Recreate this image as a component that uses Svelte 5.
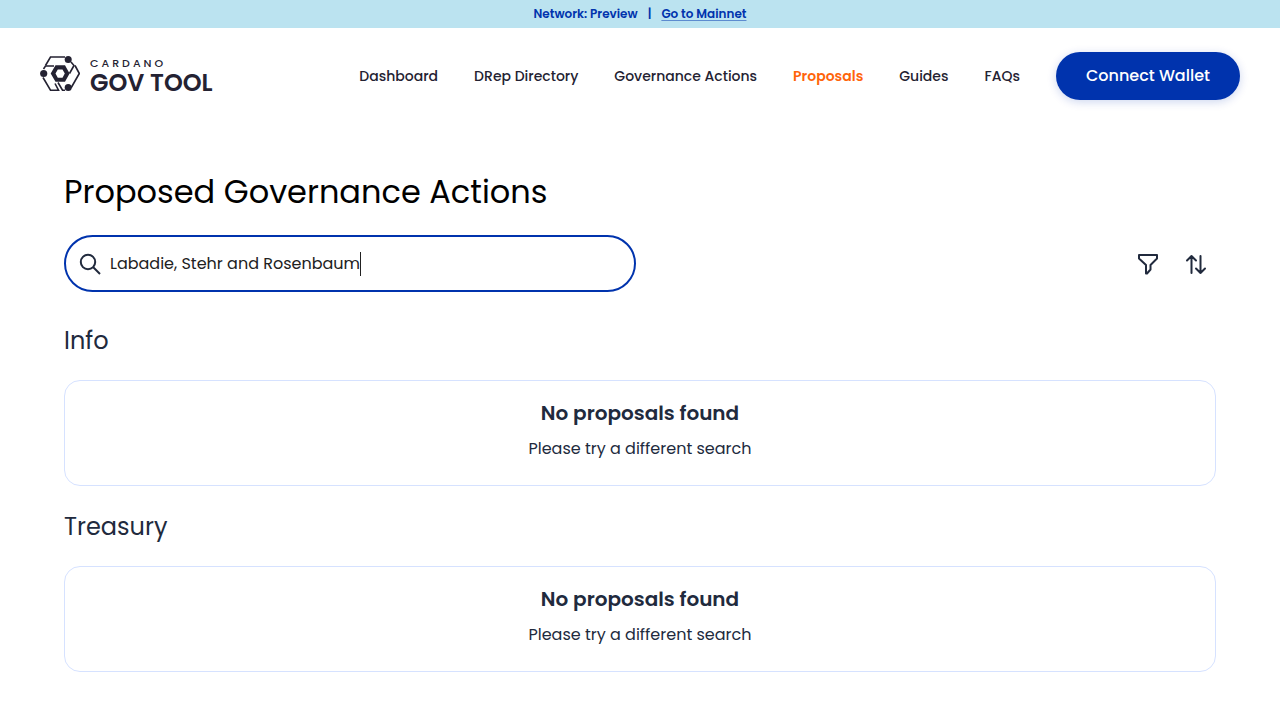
<script>
  import { onMount } from 'svelte';

  const links = ['Dashboard', 'DRep Directory', 'Governance Actions', 'Proposals', 'Guides', 'FAQs'];
  const sections = ['Info', 'Treasury'];
  let query = $state('Labadie, Stehr and Rosenbaum');
  let field;

  onMount(() => {
    field.focus();
    field.setSelectionRange(query.length, query.length);
  });
</script>

<div class="network">
  <span>Network: Preview</span>
  <span class="bar">|</span>
  <a href="#mainnet">Go to Mainnet</a>
</div>

<header>
  <a class="logo" href="#home" aria-label="Cardano Gov Tool">
    <svg width="40" height="36" viewBox="0 0 40 36" aria-hidden="true">
      <g fill="none" stroke="#242232" stroke-width="1.6">
        <path d="M25 1H10.500L5.500 9.500" />
        <path d="M3.500 13L5.500 10H14" />
        <path d="M3 21.500L10.500 34.200H18.500L15 27.500" />
        <path d="M18 26.500L22.500 34.200H25" />
        <path d="M31 6L34 9.500L29.500 17.500" />
        <path d="M35 9.500L39.300 17.500L31 32" />
      </g>
      <g fill="#242232">
        <circle cx="3.700" cy="17.500" r="3.600" />
        <circle cx="28.200" cy="3.500" r="3.500" />
        <circle cx="28.200" cy="31.600" r="3.500" />
        <path fill-rule="evenodd" d="M15.500 9.300H25L29.600 17.500L25 25.700H15.500L10.700 17.500ZM17.800 13.500L15.500 17.500L17.800 21.700H22.500L24.800 17.500L22.500 13.500Z" />
      </g>
    </svg>
    <span class="wordmark"><small>CARDANO</small><strong>GOV TOOL</strong></span>
  </a>
  <nav>
    {#each links as link}
      <a href="#{link}" class:active={link === 'Proposals'}>{link}</a>
    {/each}
    <button class="connect" type="button">Connect Wallet</button>
  </nav>
</header>

<main>
  <h1>Proposed Governance Actions</h1>
  <div class="tools">
    <label class="search">
      <svg width="24" height="24" viewBox="0 0 24 24" fill="none" stroke="#212a3d" stroke-width="2" aria-hidden="true">
        <circle cx="10" cy="10" r="7.200" /><path d="M15 15l7 7" />
      </svg>
      <span class="entry">
        <input type="text" aria-label="Search proposals" bind:value={query} bind:this={field} />
        <span class="caret"></span>
      </span>
    </label>
    <div class="actions">
      <button type="button" aria-label="Filter">
        <svg width="24" height="24" viewBox="0 0 24 24" fill="none" stroke="#212a3d" stroke-width="2" stroke-linejoin="round" aria-hidden="true">
          <path d="M3 3H21V6.500L14.500 13V17.500L11 21.500H10V13L3 6.500Z" />
        </svg>
      </button>
      <button type="button" aria-label="Sort">
        <svg width="24" height="24" viewBox="0 0 24 24" fill="none" stroke="#212a3d" stroke-width="2" stroke-linecap="round" stroke-linejoin="round" aria-hidden="true">
          <path d="M7.500 21V4M3 8.500L7.500 4L12 8.500M16.500 4V21M12 16.500L16.500 21L21 16.500" />
        </svg>
      </button>
    </div>
  </div>

  {#each sections as section}
    <section>
      <h2>{section}</h2>
      <div class="card">
        <h3>No proposals found</h3>
        <p>Please try a different search</p>
      </div>
    </section>
  {/each}
</main>

<style>
  :global(body) {
    background: #fff;
    color: #212a3d;
    font-family: Poppins, Inter, sans-serif;
  }
  h1, h2, h3, p { margin: 0; font-weight: 400; }
  a { color: inherit; text-decoration: none; }
  button { border: 0; font: inherit; cursor: pointer; }

  .network {
    display: flex;
    justify-content: center;
    gap: 10px;
    padding: 4px 16px;
    background: #bbe3f0;
    color: #0033ad;
    font-size: 12px;
    font-weight: 600;
    line-height: 20px;
  }
  .network a {
    text-decoration: underline;
    text-decoration-color: rgba(0, 51, 173, 0.5);
    text-decoration-thickness: 1px;
    text-underline-offset: 2px;
  }

  header {
    display: flex;
    align-items: center;
    justify-content: space-between;
    padding: 24px 40px;
    color: #242232;
  }
  .logo { display: flex; align-items: center; gap: 10px; padding-bottom: 4px; }
  .wordmark { display: flex; flex-direction: column; }
  .wordmark small { font-size: 11px; font-weight: 500; line-height: 18px; letter-spacing: 3px; }
  .wordmark strong { font-size: 24px; font-weight: 600; line-height: 22px; }

  nav {
    display: flex;
    align-items: center;
    gap: 36px;
    font-size: 14px;
    font-weight: 500;
    line-height: 24px;
    white-space: nowrap;
  }
  .active { color: #ff640a; font-weight: 600; }
  .connect {
    padding: 12px 30px;
    border-radius: 24px;
    background: #0033ad;
    box-shadow: 0 2px 10px rgba(0, 51, 173, 0.2);
    color: #fff;
    font-size: 16px;
    font-weight: 500;
    line-height: 24px;
  }

  main { padding: 40px 64px; }
  h1 { color: #000; font-size: 32px; line-height: 56px; }
  .tools { display: flex; justify-content: space-between; align-items: center; margin-top: 15px; }
  .search {
    box-sizing: border-box;
    display: flex;
    align-items: center;
    gap: 8px;
    width: 50%;
    max-width: 572px;
    padding: 14px 12px;
    border: 2px solid #0033ad;
    border-radius: 29px;
  }
  .search svg { flex: none; }
  .entry { display: flex; flex: 1; align-items: center; min-width: 0; }
  input {
    field-sizing: content;
    min-width: 0;
    padding: 0;
    border: 0;
    outline: 0;
    background: none;
    caret-color: transparent;
    color: #212121;
    font: 400 16px/25px Poppins, Inter, sans-serif;
  }
  .caret { visibility: hidden; flex: none; width: 1px; height: 24px; background: #212121; }
  input:focus + .caret { visibility: visible; }
  .actions { display: flex; gap: 8px; }
  .actions button { display: flex; padding: 8px; background: none; color: inherit; }
  section { margin-top: 16px; }
  .tools + section { margin-top: 24px; }
  h2 { font-size: 24px; line-height: 50px; }
  .card {
    margin-top: 14px;
    padding: 16px 24px 24px;
    border: 1px solid #d6e2ff;
    border-radius: 16px;
    text-align: center;
  }
  h3 { font-size: 20px; font-weight: 600; line-height: 32px; }
  p { margin-top: 8px; font-size: 16px; line-height: 24px; }
</style>
